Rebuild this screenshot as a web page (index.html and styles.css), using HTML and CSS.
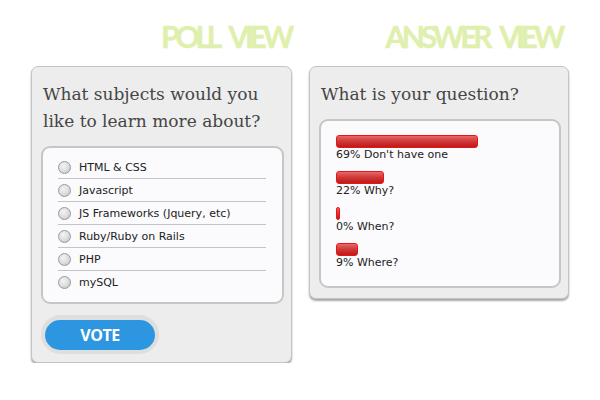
FILE: index.html
```html
<!DOCTYPE html>
<html>
<head>
<meta charset="utf-8">
<link rel="stylesheet" href="styles.css">
</head>
<body>
<div class="page">
  <div class="column column-poll">
    <h1 class="view-title">POLL VIEW</h1>
    <div class="card">
      <h2 class="question">What subjects would you like to learn more about?</h2>
      <ul class="box options">
        <li class="option"><span class="radio"></span>HTML &amp; CSS</li>
        <li class="option"><span class="radio"></span>Javascript</li>
        <li class="option"><span class="radio"></span>JS Frameworks (Jquery, etc)</li>
        <li class="option"><span class="radio"></span>Ruby/Ruby on Rails</li>
        <li class="option"><span class="radio"></span>PHP</li>
        <li class="option"><span class="radio"></span>mySQL</li>
      </ul>
      <div class="vote-ring"><button class="vote">VOTE</button></div>
    </div>
  </div>
  <div class="column column-answer">
    <h1 class="view-title answer-title">ANSWER VIEW</h1>
    <div class="card card-answer">
      <h2 class="question">What is your question?</h2>
      <ul class="box results">
        <li class="result"><span class="bar" style="width:142px"></span><span class="label">69% Don't have one</span></li>
        <li class="result"><span class="bar" style="width:48px"></span><span class="label">22% Why?</span></li>
        <li class="result"><span class="bar" style="width:4px"></span><span class="label">0% When?</span></li>
        <li class="result"><span class="bar" style="width:22px"></span><span class="label">9% Where?</span></li>
      </ul>
    </div>
  </div>
</div>
</body>
</html>
```

FILE: styles.css
```css
* { box-sizing: border-box; }
body {
  margin: 0;
  background: #ffffff;
}
.page {
  display: flex;
  align-items: flex-start;
  gap: 17px;
  padding-left: 31px;
}
.column-poll { width: 261px; }
.column-answer { width: 260px; }
.view-title {
  margin: 0;
  height: 66px;
  padding-top: 18px;
  padding-right: 2px;
  text-align: right;
  font-family: Lato, "Open Sans", sans-serif;
  font-weight: 700;
  font-size: 30px;
  line-height: 36px;
  letter-spacing: -4.2px;
  word-spacing: 9px;
  color: #dff0ae;
  -webkit-text-stroke: 0.4px #dff0ae;
}
.answer-title { padding-right: 8px; }
.card {
  background: #ededed;
  border: 1px solid #c4c4c4;
  border-radius: 7px;
  box-shadow: 0 2px 2px rgba(0, 0, 0, 0.35);
  padding: 14px 7px 8px 9px;
}
.card-answer { padding-bottom: 10px; }
.question {
  margin: 0 0 11px 2px;
  font-family: "DejaVu Serif", Georgia, serif;
  font-weight: normal;
  font-size: 17px;
  line-height: 27px;
  color: #454545;
}
.box {
  list-style: none;
  margin: 0;
  background: #fbfafd;
  border: 2px solid #c6c6c6;
  border-radius: 9px;
}
.options {
  padding: 8px 16px 9px 15px;
}
.option {
  display: flex;
  align-items: center;
  height: 23px;
  border-bottom: 1px solid #c4c4c4;
  font-family: "DejaVu Sans", Verdana, sans-serif;
  font-size: 11px;
  color: #222;
}
.option:last-child { border-bottom: none; height: 22px; }
.radio {
  width: 13px;
  height: 13px;
  border-radius: 50%;
  border: 1px solid #9a9a9a;
  background: radial-gradient(circle at 40% 35%, #f4f4f4 0%, #dcdcdc 55%, #bdbdbd 100%);
  margin-right: 8px;
  flex: none;
}
.vote-ring {
  display: inline-block;
  margin-top: 11px;
  border: 4px solid #dedede;
  border-width: 5px 4px 4px 4px;
  border-radius: 22px;
}
.vote {
  display: block;
  width: 110px;
  height: 30px;
  border: none;
  border-radius: 16px;
  background: #2d96e1;
  color: #fff;
  font-family: "Open Sans", Lato, sans-serif;
  font-weight: 700;
  font-size: 16px;
  letter-spacing: -0.5px;
  padding: 0;
}
.results {
  padding: 14px 15px 16px 15px;
}
.result {
  display: flex;
  flex-direction: column;
  align-items: flex-start;
  margin-bottom: 9px;
}
.result:last-child { margin-bottom: 0; }
.bar {
  display: block;
  height: 13px;
  border: 1px solid #f21010;
  border-radius: 3px;
  background: linear-gradient(#e56a6a, #d23a3a 45%, #b81c1c);
}
.label {
  font-family: "DejaVu Sans", Verdana, sans-serif;
  font-size: 11px;
  line-height: 14px;
  color: #222;
}
```
